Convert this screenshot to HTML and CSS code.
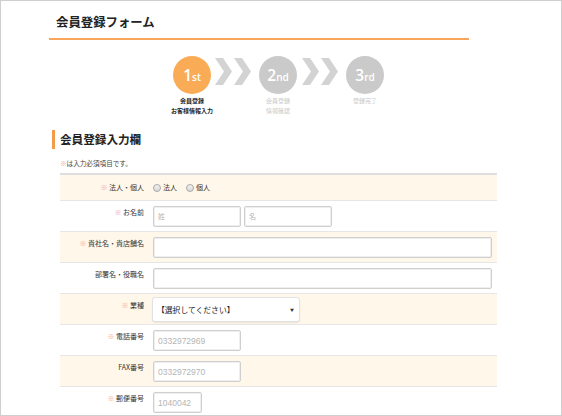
FILE: index.html
```html
<!DOCTYPE html>
<html lang="ja">
<head>
<meta charset="utf-8">
<title>会員登録フォーム</title>
<link rel="stylesheet" href="styles.css">
</head>
<body>
<div class="frame">
  <header class="page-head">
    <h1 class="page-title">会員登録フォーム</h1>
  </header>

  <div class="steps">
    <div class="step is-current">
      <div class="step-circle"><span class="num">1</span><span class="suf">st</span></div>
      <div class="step-label">会員登録<br>お客様情報入力</div>
    </div>
    <svg class="step-arrow" width="37" height="27" viewBox="0 0 37 27"><polygon points="0,0 8,0 17,13.5 8,27 0,27 9,13.5"/><polygon points="19,0 27,0 36,13.5 27,27 19,27 28,13.5"/></svg>
    <div class="step">
      <div class="step-circle"><span class="num">2</span><span class="suf">nd</span></div>
      <div class="step-label">会員登録<br>情報確認</div>
    </div>
    <svg class="step-arrow" width="37" height="27" viewBox="0 0 37 27"><polygon points="0,0 8,0 17,13.5 8,27 0,27 9,13.5"/><polygon points="19,0 27,0 36,13.5 27,27 19,27 28,13.5"/></svg>
    <div class="step">
      <div class="step-circle"><span class="num">3</span><span class="suf">rd</span></div>
      <div class="step-label">登録完了</div>
    </div>
  </div>

  <h2 class="section-title">会員登録入力欄</h2>
  <p class="req-note"><span class="req">※</span>は入力必須項目です。</p>

  <div class="form-table">
    <div class="row row-first alt">
      <div class="label"><span class="req">※</span> 法人・個人</div>
      <div class="field radios">
        <label class="radio"><span class="radio-dot"></span>法人</label>
        <label class="radio"><span class="radio-dot"></span>個人</label>
      </div>
    </div>
    <div class="row">
      <div class="label"><span class="req">※</span> お名前</div>
      <div class="field pair">
        <input class="input w-88" type="text" placeholder="姓">
        <input class="input w-88" type="text" placeholder="名">
      </div>
    </div>
    <div class="row alt">
      <div class="label"><span class="req">※</span> 貴社名・貴店舗名</div>
      <div class="field"><input class="input w-339" type="text"></div>
    </div>
    <div class="row">
      <div class="label">部署名・役職名</div>
      <div class="field"><input class="input w-339" type="text"></div>
    </div>
    <div class="row alt">
      <div class="label"><span class="req">※</span> 業種</div>
      <div class="field field-select">
        <div class="select"><span>【選択してください】</span><span class="caret">▼</span></div>
      </div>
    </div>
    <div class="row">
      <div class="label"><span class="req">※</span> 電話番号</div>
      <div class="field"><input class="input w-88 num-input" type="text" placeholder="0332972969"></div>
    </div>
    <div class="row alt">
      <div class="label">FAX番号</div>
      <div class="field"><input class="input w-88 num-input" type="text" placeholder="0332972970"></div>
    </div>
    <div class="row">
      <div class="label"><span class="req">※</span> 郵便番号</div>
      <div class="field"><input class="input w-49 num-input" type="text" placeholder="1040042"></div>
    </div>
  </div>
</div>
</body>
</html>
```

FILE: styles.css
```css
html, body {
  margin: 0;
  padding: 0;
  background: #ffffff;
}

body {
  font-family: "Noto Sans CJK JP", "Noto Sans", sans-serif;
  color: #333333;
}

.frame {
  box-sizing: border-box;
  width: 562px;
  height: 416px;
  border: 1px solid #cfcfcf;
  overflow: hidden;
}

.page-head {
  margin-left: 48px;
  width: 420px;
  padding: 12px 0 7px 7px;
  box-sizing: border-box;
  border-bottom: 2px solid #f8a65c;
}

.page-title {
  margin: 0;
  font-size: 12.4px;
  line-height: 18px;
  font-weight: 700;
  color: #222222;
}

.steps {
  display: flex;
  align-items: flex-start;
  margin: 16px 0 0 170px;
}

.step {
  width: 42px;
  display: flex;
  flex-direction: column;
  align-items: center;
}

.step-circle {
  width: 38px;
  height: 38px;
  border-radius: 50%;
  background: #cacaca;
  color: #ffffff;
  display: flex;
  align-items: baseline;
  justify-content: center;
  font-family: "Open Sans", "Liberation Sans", sans-serif;
  font-weight: 600;
  line-height: 38px;
}

.is-current .step-circle {
  background: #f9ac55;
}

.step-circle .num {
  font-size: 15.5px;
}

.step-circle .suf {
  font-size: 10px;
}

.step-label {
  margin-top: 2px;
  font-size: 6px;
  line-height: 10px;
  text-align: center;
  white-space: nowrap;
  color: #c8c8c8;
}

.is-current .step-label {
  color: #222222;
  font-weight: 700;
}

.step-arrow {
  margin-top: 2px;
  fill: #d3d3d3;
}

.steps > .step-arrow:nth-child(2) {
  margin-left: 2px;
  margin-right: 5px;
}

.steps > .step-arrow:nth-child(4) {
  margin-left: 3px;
  margin-right: 5px;
}

.section-title {
  margin: 14px 0 0 51px;
  border-left: 3px solid #f39b4a;
  padding-left: 5px;
  font-size: 11.6px;
  line-height: 19px;
  font-weight: 700;
  color: #222222;
}

.req-note {
  margin: 9px 0 0 59px;
  font-size: 6.6px;
  line-height: 11px;
  color: #444444;
}

.req {
  color: #f5a0a0;
}

.form-table {
  margin: 4px 0 0 59px;
  width: 437px;
  border-top: 2px solid #dedede;
}

.row {
  display: grid;
  grid-template-columns: 84px 1fr;
  height: 31px;
  box-sizing: border-box;
  border-bottom: 1px solid #e6e6e6;
}

.row.alt {
  background: #fff8ea;
}

.row-first {
  height: 26px;
  align-items: center;
}

.label {
  text-align: right;
  font-size: 7px;
  line-height: 9px;
  padding-top: 7px;
  white-space: nowrap;
  color: #333333;
}

.row-first .label {
  padding-top: 0;
}

.field {
  padding: 5px 0 0 9px;
}

.field-select {
  padding-top: 4px;
}

.row-first .field {
  padding-top: 0;
}

.radios {
  display: flex;
  align-items: center;
  gap: 9px;
}

.radio {
  display: flex;
  align-items: center;
  gap: 2px;
  font-size: 7px;
  line-height: 9px;
}

.radio-dot {
  box-sizing: border-box;
  width: 8px;
  height: 8px;
  border-radius: 50%;
  border: 1px solid #a9a9a9;
  background: linear-gradient(#f2f2f2, #d9d9d9);
}

.pair {
  display: flex;
  gap: 3px;
}

.input {
  display: block;
  box-sizing: border-box;
  height: 21px;
  margin: 0;
  padding: 0 4px;
  border: 1px solid #cfcfcf;
  border-radius: 2px;
  box-shadow: inset 0 0 0 1px #efefef;
  background: #ffffff;
  font-family: "Liberation Sans", "Noto Sans CJK JP", sans-serif;
  font-size: 7px;
  color: #333333;
  outline: none;
}

.input::placeholder {
  color: #b5b5b5;
}

.num-input {
  font-size: 8.5px;
}

.w-88 { width: 88px; }
.w-339 { width: 339px; }
.w-49 { width: 49px; }

.select {
  box-sizing: border-box;
  width: 146px;
  height: 23px;
  padding: 0 5px 0 4px;
  display: flex;
  align-items: center;
  justify-content: space-between;
  background: #ffffff;
  border-radius: 2px;
  box-shadow: 0 0 0 1px #e2e2e2, 0 1px 2px rgba(0, 0, 0, 0.25);
  font-size: 7.8px;
  color: #222222;
}

.caret {
  font-size: 4px;
  color: #333333;
}
```
